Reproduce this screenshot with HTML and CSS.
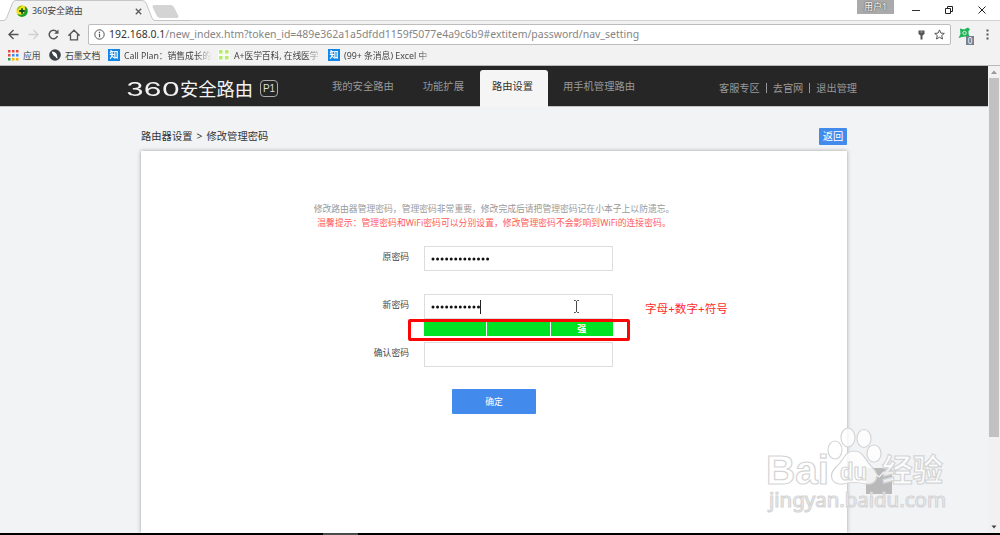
FILE: index.html
```html
<!DOCTYPE html>
<html lang="zh-CN">
<head>
  <meta charset="UTF-8">
  <title>360安全路由</title>
  <link rel="stylesheet" href="styles.css">
</head>
<body>
  <div class="tabstrip">
    <svg class="tab-shape" width="190" height="22" viewBox="0 0 190 22">
      <path d="M0 20.5H5Q6 20 7 17L12.500 3Q13.500.5 16 .5H142Q145 .5 146 3L152 18Q153 20.500 155 20.500H190V22H0Z" fill="#f2f2f2"/>
      <path d="M0 20.500H4Q6 20 7 17L12.500 3Q13.500.5 16 .5H142Q145 .5 146 3L152 18Q153 20.500 155 20.500H190" fill="none" stroke="#c6c6c6"/>
      <path d="M154 5.500H171Q173 5.500 174 8L178 16Q178.500 17.500 177 17.500H160Q158 17.500 157 15.500L153 7Q152.500 5.500 154 5.500Z" fill="#d4d4d4" stroke="#c8c8c8" stroke-width=".6"/>
    </svg>
    <div class="tab">
      <svg width="12" height="12" viewBox="0 0 12 12">
        <circle cx="6" cy="6" r="5.700" fill="#f5e21b"/>
        <path d="M1 9A5.700 5.700 0 0 0 11.500 7.500A5.700 5.700 0 0 0 8.500 1Q10 5 8 8T1 9Z" fill="#209c30"/>
        <path d="M1.500 3Q3 .3 6.500.4Q3 2 1.500 6Z" fill="#7bc52c"/>
        <path d="M6 3.200V8.800M3.200 6H8.800" stroke="#0b5420" stroke-width="1.800"/>
      </svg>
      <span class="tab-title">360安全路由</span>
      <svg width="7" height="7" viewBox="0 0 7 7"><path d="M.8.8L6.200 6.200M6.200.8L.8 6.200" stroke="#5a5a5a" stroke-width="1.300"/></svg>
    </div>
    <div class="window-buttons">
      <span class="user">用户1</span>
      <svg width="8" height="10" viewBox="0 0 8 10"><path d="M0 5.500H8" stroke="#333"/></svg>
      <svg width="8" height="8" viewBox="0 0 8 8"><path d="M.5 2.500H5.500V7.500H.5ZM2.500 2V.5H7.500V5.500H6" fill="none" stroke="#222"/></svg>
      <svg width="8" height="8" viewBox="0 0 8 8"><path d="M.5.5L7.500 7.500M7.500.5L.5 7.500" stroke="#222"/></svg>
    </div>
  </div>

  <div class="toolbar">
    <svg width="11" height="11" viewBox="0 0 11 11"><path d="M10.500 5.500H1.200M5.500 1L1 5.500L5.500 10" fill="none" stroke="#555" stroke-width="1.400"/></svg>
    <svg width="11" height="11" viewBox="0 0 11 11"><path d="M.5 5.500H9.800M5.500 1L10 5.500L5.500 10" fill="none" stroke="#d0d0d0" stroke-width="1.300"/></svg>
    <svg width="11" height="11" viewBox="0 0 11 11"><path d="M9.500 7A4.300 4.300 0 1 1 8.800 2.700" fill="none" stroke="#555" stroke-width="1.500"/><path d="M10.500.5V4.800H6.200Z" fill="#555"/></svg>
    <svg width="12" height="12" viewBox="0 0 12 12"><path d="M.8 6.200L6 1.200L11.200 6.200H9.500V10.800H2.500V6.200Z" fill="none" stroke="#555" stroke-width="1.300"/></svg>
    <div class="address">
      <svg width="11" height="11" viewBox="0 0 11 11"><circle cx="5.500" cy="5.500" r="4.700" fill="none" stroke="#555"/><path d="M5.500 4.800V8.200M5.500 2.700V3.900" stroke="#555" stroke-width="1.200"/></svg>
      <span class="url"><b>192.168.0.1</b>/new_index.htm?token_id=489e362a1a5dfdd1159f5077e4a9c6b9#extitem/password/nav_setting</span>
      <svg class="key" width="7" height="10" viewBox="0 0 7 10"><path d="M.5 .5H6.500V4L4.500 5.500V9.500H2.500V5.500L.5 4Z" fill="#555"/><path d="M2.500 2H4.500" stroke="#bbb"/></svg>
      <svg width="11" height="11" viewBox="0 0 11 11"><path d="M5.500.9L6.900 4.100L10.300 4.400L7.700 6.600L8.500 10L5.500 8.200L2.500 10L3.300 6.600L.7 4.400L4.100 4.100Z" fill="none" stroke="#555"/></svg>
    </div>
    <div class="extension">
      <svg width="13" height="12" viewBox="0 0 13 12"><path d="M2 1.500L6 2.500L10 .5L12 2.500L10.500 4L10.500 7L12 10L8 9.500L4 10L.5 11L2.500 7Z" fill="#1fb358"/><circle cx="6.500" cy="6" r="1.700" fill="none" stroke="#d8f2df"/></svg>
      <span class="count">0</span>
    </div>
    <svg class="menu" width="3" height="11" viewBox="0 0 3 11"><path d="M.5 .5H2.500V2.500H.5ZM.5 4.500H2.500V6.500H.5ZM.5 8.500H2.500V10.500H.5Z" fill="#555"/></svg>
  </div>

  <div class="bookmarks">
    <div class="bookmark apps">
      <svg width="11" height="11" viewBox="0 0 11 11">
        <path d="M0 0H2.500V2.500H0ZM4 0H6.500V2.500H4ZM8 0H10.500V2.500H8ZM0 4H2.500V6.500H0Z" fill="#e8473f"/>
        <path d="M4 4H6.500V6.500H4ZM8 4H10.500V6.500H8Z" fill="#3d8be8"/>
        <path d="M0 8H2.500V10.500H0Z" fill="#27a05c"/>
        <path d="M4 8H6.500V10.500H4ZM8 8H10.500V10.500H8Z" fill="#f4b400"/>
      </svg>
      <span>应用</span>
    </div>
    <div class="bookmark shimo">
      <svg width="12" height="12" viewBox="0 0 12 12"><circle cx="6" cy="6" r="5.800" fill="#3c4146"/><path d="M2.800 2.500Q8.500 2.500 8.600 9.500Q7 9.500 6.500 7.800Q3.500 6.500 2.800 2.500Z" fill="#fff"/></svg>
      <span>石墨文档</span>
    </div>
    <div class="bookmark call">
      <i class="zhi">知</i>
      <span>Call Plan：销售成长的</span>
    </div>
    <div class="bookmark medical">
      <svg width="12" height="12" viewBox="0 0 12 12"><path d="M0 0H12V12H0Z" fill="#f8fbf4"/><path d="M1 1H4.500V4.500H1ZM7 1H10.500V4.500H7ZM1 7H4.500V10.500H1ZM7 7H10.500V10.500H7Z" fill="#b4ee68"/></svg>
      <span>A+医学百科, 在线医学</span>
    </div>
    <div class="bookmark excel">
      <i class="zhi">知</i>
      <span>(99+ 条消息) Excel 中</span>
    </div>
  </div>

  <div class="viewport">
    <div class="page">
      <div class="header">
        <div class="logo">
          <span class="logo-num">360</span>
          <span class="logo-name">安全路由</span>
          <span class="model">P1</span>
        </div>
        <div class="nav">
          <a class="nav-item">我的安全路由</a>
          <a class="nav-item">功能扩展</a>
          <a class="nav-item active">路由设置</a>
          <a class="nav-item">用手机管理路由</a>
        </div>
        <div class="links">
          <a>客服专区</a><a>去官网</a><a>退出管理</a>
        </div>
      </div>

      <div class="content">
        <div class="crumbs">
          <span>路由器设置 &gt; 修改管理密码</span>
          <a class="back">返回</a>
        </div>
        <div class="panel">
          <p class="desc">修改路由器管理密码，管理密码非常重要，修改完成后请把管理密码记在小本子上以防遗忘。</p>
          <p class="warn">温馨提示：管理密码和WiFi密码可以分别设置，修改管理密码不会影响到WiFi的连接密码。</p>
          <div class="form">
            <div class="row">
              <label>原密码</label>
              <div class="field">
                <svg width="60" height="6"><path d="M2 3H60" class="dots"/></svg>
              </div>
            </div>
            <div class="row">
              <label>新密码</label>
              <div class="field">
                <svg width="49" height="6"><path d="M2 3H49" class="dots"/></svg>
                <i class="caret"></i>
                <svg class="ibeam" width="7" height="13" viewBox="0 0 7 13"><path d="M1 .5H2.500L3.500 1.500L4.500.5H6M3.500 1.500V11.500M1 12.500H2.500L3.500 11.500L4.500 12.500H6" fill="none" stroke="#333" stroke-width=".9"/></svg>
              </div>
              <div class="strength"><i></i><i></i><i>强</i></div>
              <div class="mark-box"></div>
              <div class="mark-text">字母+数字+符号</div>
            </div>
            <div class="row">
              <label>确认密码</label>
              <div class="field"></div>
            </div>
            <a class="submit">确定</a>
          </div>
        </div>
      </div>
    </div>
    <div class="scrollbar">
      <svg width="10" height="12" viewBox="0 0 10 12"><path d="M2 8L5 4.500L8 8Z" fill="#999"/></svg>
      <div class="thumb"></div>
      <svg width="10" height="12" viewBox="0 0 10 12"><path d="M2.500 4.500L5 7.500L7.500 4.500Z" fill="#444"/></svg>
    </div>
    <div class="to-top"></div>
    <svg class="watermark" width="200" height="100" viewBox="0 0 200 100">
      <g fill="#fff" fill-opacity=".8" stroke="#d4d5d6" stroke-width="1.200">
        <text x="4" y="61" class="wm-brand" textLength="63" lengthAdjust="spacingAndGlyphs">Bai</text>
        <ellipse cx="73" cy="27" rx="7" ry="9"/>
        <ellipse cx="86" cy="14.500" rx="7" ry="9.500"/>
        <ellipse cx="102" cy="15.500" rx="7" ry="9"/>
        <ellipse cx="112" cy="30.500" rx="7" ry="8.500"/>
        <path d="M92 28C102 28 103 38 110 44C119 53 114 62 104 61Q92 58 81 61C69 62 66 52 74 44C82 38 82 28 92 28Z"/>
        <text x="78" y="57" class="wm-du" textLength="27" lengthAdjust="spacingAndGlyphs">du</text>
        <text x="120" y="58" class="wm-cn" textLength="61" lengthAdjust="spacingAndGlyphs">经验</text>
        <text x="7" y="84" class="wm-site" textLength="177" lengthAdjust="spacingAndGlyphs">jingyan.baidu.com</text>
      </g>
      <path d="M111 49L117 54L122 49" fill="none" stroke="#f2f2f2" stroke-width="1.200"/>
    </svg>
  </div>
  <div class="taskbar"></div>
</body>
</html>
```

FILE: styles.css
```css
* {
  box-sizing: border-box;
}

body {
  margin: 0;
  height: 535px;
  display: flex;
  flex-direction: column;
  overflow: hidden;
  background: #f2f2f2;
  font-family: "Noto Sans", "Noto Sans CJK SC", sans-serif;
  font-size: 9px;
  color: #444;
}

i {
  font-style: normal;
}

svg {
  display: block;
  flex: none;
}

/* browser frame */
.tabstrip {
  position: relative;
  flex: none;
  height: 21px;
  display: flex;
  justify-content: space-between;
  background: #fff;
  border-bottom: 1px solid #d2d2d2;
}

.tab-shape {
  position: absolute;
  left: 0;
  top: 0;
}

.tab {
  position: relative;
  display: flex;
  align-items: center;
  width: 142px;
  padding-left: 16px;
  height: 22px;
}

.tab-title {
  flex: 1;
  margin-left: 4px;
  font-size: 8.9px;
  line-height: 12px;
  padding-bottom: 1px;
}

.window-buttons {
  display: flex;
  align-items: center;
  gap: 25px;
  padding-right: 14px;
}

.user {
  align-self: flex-start;
  width: 37px;
  height: 14px;
  margin-right: -7px;
  background: #aaa;
  color: #fff;
  font-size: 9px;
  line-height: 13px;
  text-align: center;
  text-shadow: 0 0 1px #444, 0 0 2px #555;
}

.toolbar {
  flex: none;
  height: 26px;
  display: flex;
  align-items: center;
  padding: 1px 11px 0 8px;
  gap: 9px;
}

.address {
  flex: none;
  display: flex;
  align-items: center;
  width: 863px;
  height: 21px;
  margin-left: -1px;
  padding: 0 5px;
  background: #fff;
  border: 1px solid #bdbdbd;
  border-radius: 2px;
}

.url {
  flex: 1;
  margin-left: 4px;
  padding-bottom: 1px;
  font-size: 10.48px;
  color: #858585;
  white-space: nowrap;
}

.url b {
  font-weight: normal;
  color: #333;
}

.key {
  margin-right: 9px;
}

.extension {
  position: relative;
  width: 18px;
  height: 16px;
  margin-left: -2px;
}

.count {
  position: absolute;
  right: 2px;
  bottom: -2px;
  width: 8px;
  height: 9px;
  background: #7b7f8c;
  color: #fff;
  font-size: 8px;
  line-height: 9px;
  text-align: center;
}

.menu {
  margin-left: 1px;
}

.bookmarks {
  flex: none;
  height: 19px;
  display: flex;
  padding-left: 8px;
  border-bottom: 1px solid #b9b9b9;
}

.bookmark {
  display: flex;
  align-items: center;
  gap: 4px;
  height: 16px;
  font-size: 8.8px;
  white-space: nowrap;
  overflow: hidden;
}

.apps {
  width: 41px;
}

.shimo {
  width: 59px;
}

.call,
.medical,
.excel {
  -webkit-mask-image: linear-gradient(90deg, #000 85%, transparent);
  mask-image: linear-gradient(90deg, #000 85%, transparent);
}

.call {
  width: 104px;
  margin-right: 6px;
}

.call span {
  letter-spacing: -0.050px;
}

.medical {
  width: 104px;
  margin-right: 6px;
}

.medical span {
  letter-spacing: -0.1px;
}

.excel {
  width: 106px;
}

.zhi {
  flex: none;
  width: 12px;
  height: 12px;
  background: #1287e8;
  color: #fff;
  font-size: 9px;
  font-weight: bold;
  line-height: 11px;
  text-align: center;
}

/* page */
.viewport {
  position: relative;
  flex: 1;
  display: flex;
  min-height: 0;
}

.page {
  width: 988px;
  display: flex;
  flex-direction: column;
  background: #f2f3f5;
}

.header {
  flex: none;
  height: 41px;
  display: flex;
  padding-left: 126px;
  background: #262626;
  border-bottom: 1px solid #c4c4c4;
  color: #999;
}

.logo {
  display: flex;
  align-items: center;
  width: 187px;
  padding-top: 5px;
  color: #f2f2f2;
}

.logo-num {
  width: 54px;
  font-family: Inter, sans-serif;
  font-size: 18.5px;
  font-weight: 400;
  transform: scaleX(1.56);
  transform-origin: left;
}

.logo-name {
  width: 80px;
  font-size: 18.3px;
  line-height: 18px;
}

.model {
  width: 18px;
  height: 17px;
  border: 1px solid #aaa;
  border-radius: 4px;
  color: #ddd;
  font-family: "Liberation Sans", sans-serif;
  font-size: 10px;
  line-height: 16px;
  text-align: center;
}

.nav {
  display: flex;
  width: 406px;
  padding-top: 4px;
  font-size: 10.3px;
}

.nav-item {
  height: 37px;
  padding: 0 16px 0 13px;
  line-height: 33px;
  white-space: nowrap;
}

.nav-item:first-child {
  padding-left: 19px;
}

.nav-item.active {
  width: 68px;
  padding: 0 0 0 12px;
  margin-right: 2px;
  background: #f5f5f5;
  border-radius: 3px 3px 0 0;
  color: #333;
}

.links {
  display: flex;
  align-items: center;
  padding-top: 3px;
  font-size: 10.2px;
}

.links a {
  line-height: 10px;
}

.links a + a {
  margin-left: 6px;
  padding-left: 6px;
  border-left: 1px solid #999;
}

.content {
  flex: 1;
  display: flex;
  flex-direction: column;
  width: 706px;
  margin-left: 141px;
}

.crumbs {
  display: flex;
  justify-content: space-between;
  height: 44px;
  padding-top: 21px;
  font-size: 10.3px;
  line-height: 16px;
  color: #333;
  word-spacing: 1.400px;
}

.back {
  width: 28px;
  height: 17px;
  background: #428bed;
  border-radius: 1px;
  color: #fff;
  line-height: 17px;
  text-align: center;
}

.panel {
  flex: 1;
  padding-top: 52px;
  background: #fff;
  box-shadow: 0 0 4px rgba(0, 0, 0, 0.35);
}

.desc,
.warn {
  margin: 0;
  font-size: 8.8px;
  line-height: 13.500px;
  text-align: center;
}

.desc {
  color: #999;
}

.warn {
  color: #ff5a5a;
  letter-spacing: 0.050px;
}

.form {
  display: flex;
  flex-direction: column;
  gap: 23px;
  padding: 16px 0 0 208px;
}

.row {
  position: relative;
  display: flex;
  height: 25px;
}

.row label {
  width: 60px;
  margin-right: 15px;
  line-height: 23px;
  font-size: 8.8px;
  text-align: right;
}

.field {
  display: flex;
  align-items: center;
  width: 189px;
  height: 25px;
  padding-left: 6px;
  border: 1px solid #ddd;
}

.dots {
  fill: none;
  stroke: #111;
  stroke-width: 3;
  stroke-linecap: round;
  stroke-dasharray: 0 4.550;
}

.caret {
  width: 1px;
  height: 14px;
  background: #222;
}

.ibeam {
  margin-left: 92px;
}

.strength {
  position: absolute;
  left: 75px;
  top: 28px;
  display: grid;
  grid-template-columns: repeat(3, 1fr);
  gap: 1px;
  width: 189px;
  height: 14px;
}

.strength i {
  background: #00e324;
  color: #fff;
  font-size: 9px;
  font-weight: bold;
  line-height: 14px;
  text-align: center;
}

.mark-box {
  position: absolute;
  left: 59px;
  top: 25px;
  width: 222px;
  height: 22px;
  border: 3px solid #fb0505;
  border-radius: 2px;
}

.mark-text {
  position: absolute;
  left: 296px;
  top: 6px;
  color: #ff2b2b;
  font-size: 11.600px;
  line-height: 18px;
  white-space: nowrap;
}

.submit {
  width: 84px;
  height: 25px;
  margin: -1px 0 0 103px;
  background: #428bed;
  border-radius: 1px;
  color: #fff;
  font-size: 8.8px;
  line-height: 26px;
  text-align: center;
}

.scrollbar {
  flex: 1;
  display: flex;
  flex-direction: column;
  padding-left: 1px;
  background: #f1f1f1;
}

.thumb {
  width: 10px;
  height: 359px;
  margin-bottom: auto;
  background: #c1c1c1;
}

.to-top {
  position: absolute;
  left: 866px;
  top: 402px;
  width: 26px;
  height: 26px;
  background: #b9b9b9;
}

.watermark {
  position: absolute;
  left: 762px;
  top: 357px;
}

.wm-brand {
  font-family: "Liberation Sans", sans-serif;
  font-size: 40px;
  font-weight: bold;
}

.wm-du {
  font-family: "Liberation Sans", sans-serif;
  font-size: 23px;
  font-weight: bold;
}

.wm-cn {
  font-size: 31px;
  font-weight: bold;
}

.wm-site {
  font-family: "Noto Sans", sans-serif;
  font-size: 20px;
}

.taskbar {
  flex: none;
  height: 2px;
  background: linear-gradient(90deg, #000 323px, #555 323px, #555 358px, #000 358px);
}
```
